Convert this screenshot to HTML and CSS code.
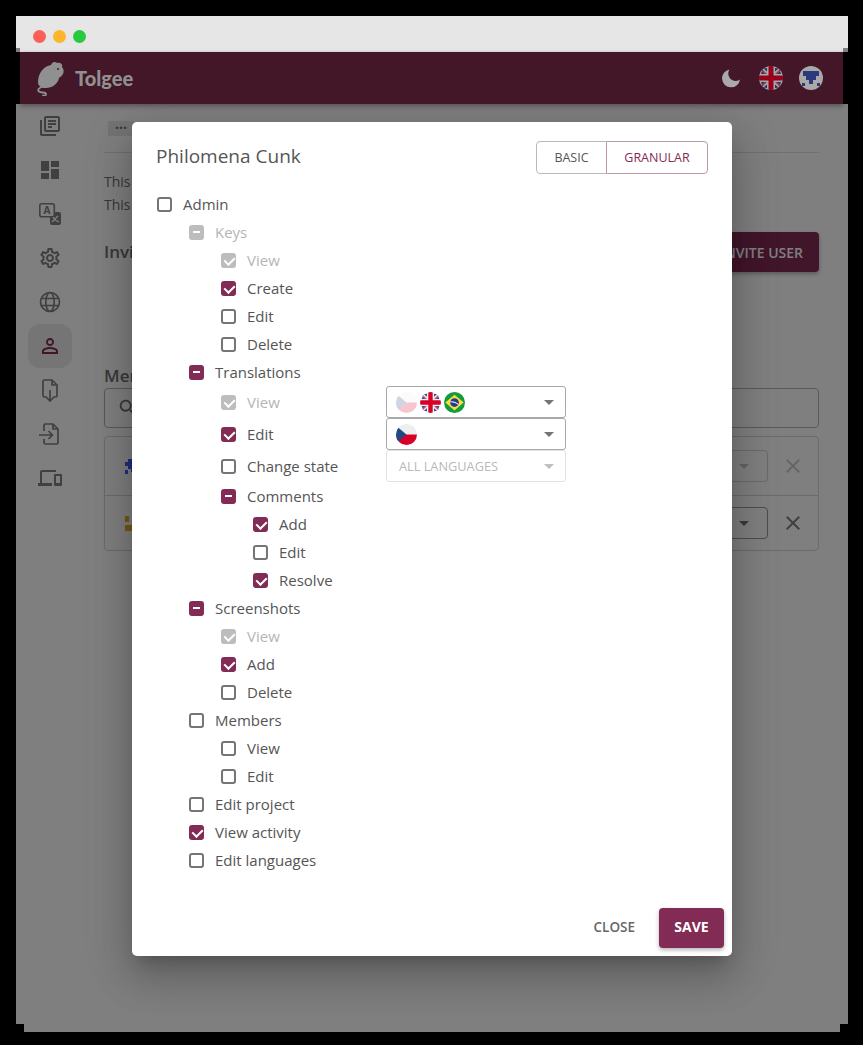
FILE: index.html
```html
<!DOCTYPE html>
<html lang="en">
<head>
    <meta charset="UTF-8">
    <title>Tolgee - Project members</title>
    <link rel="stylesheet" href="styles.css">
</head>
<body>
<svg class="defs" width="0" height="0">
    <defs>
        <clipPath id="round"><circle cx="12" cy="12" r="12"/></clipPath>
        <symbol id="flag-cz" viewBox="0 0 24 24">
            <g clip-path="url(#round)">
                <rect width="24" height="12" fill="#eeeeee"/>
                <rect y="12" width="24" height="12" fill="#d80027"/>
                <path d="M0 2 L12 12 L0 22z" fill="#1f4a85"/>
            </g>
        </symbol>
        <symbol id="flag-gb" viewBox="0 0 24 24">
            <g clip-path="url(#round)">
                <rect width="24" height="24" fill="#f0f0f0"/>
                <path d="M4.500 2.500L8 2v3.500zM19.500 2.500L16 2v3.500zM2 8l1-3 3 3zM22 8l-1-3-3 3zM2 16l1 3 3-3zM22 16l-1 3-3-3zM4.500 21.500L8 22v-3.500zM19.500 21.500L16 22v-3.500z" fill="#2a4a9c"/>
                <path d="M9.500 0h5v9.500H24v5h-9.500V24h-5v-9.500H0v-5h9.500z" fill="#d80027"/>
                <path d="M3 3l5 5h-2L2 4zM21 3l-5 5h2l4-4zM3 21l5-5h-2l-4 4zM21 21l-5-5h2l4 4z" fill="#d80027" opacity="0.7"/>
            </g>
        </symbol>
        <symbol id="flag-br" viewBox="0 0 24 24">
            <g clip-path="url(#round)">
                <rect width="24" height="24" fill="#129c3c"/>
                <path d="M12 3l10.500 9L12 21 1.500 12z" fill="#ffda44"/>
                <circle cx="12" cy="12" r="5" fill="#1f3f8c"/>
                <path d="M7.200 10.600c3.500-.4 7 .8 9.600 3.200l-.5 1c-2.500-2.200-6-3.400-9.400-3.100z" fill="#f0f0f0"/>
            </g>
        </symbol>
        <symbol id="close" viewBox="0 0 24 24">
            <path d="M19 6.410L17.590 5 12 10.590 6.410 5 5 6.410 10.590 12 5 17.590 6.410 19 12 13.410 17.590 19 19 17.590 13.410 12z"/>
        </symbol>
    </defs>
</svg>

<div class="window">
    <div class="titlebar">
        <span class="dot red"></span>
        <span class="dot yellow"></span>
        <span class="dot green"></span>
    </div>
    <div class="titlebar-edge"><div></div></div>

    <div class="header-wrap">
        <header class="header">
            <svg class="logo" viewBox="0 0 28 35" width="28" height="35">
                <path d="M1 21C1 12 7 5 14 4c1-3 4-4 6-2 3-1 6 1 5 4 2 2 2 5 1 7-1 2-3 3-4 4-1 6-7 10-13 10-5 0-8-2-8-6z" fill="#909090"/>
                <path d="M5 26c-3 1-5 3-3 4.500s7 .5 7 2.500-2 1.500-3 1.500" fill="none" stroke="#909090" stroke-width="1.800" stroke-linecap="round"/>
                <circle cx="21" cy="8" r="1" fill="#431628"/>
            </svg>
            <span class="brand">Tolgee</span>
            <svg class="moon" viewBox="0 0 20 20" width="20" height="20">
                <path d="M8.500 1.500a9 9 0 1 0 10.500 10 7 7 0 0 1-4 1.500 7.500 7.500 0 0 1-6.500-11.500z" fill="#aaaaaa"/>
            </svg>
            <svg class="head-flag" width="24" height="24"><use href="#flag-gb"/></svg>
            <svg class="avatar" viewBox="0 0 24 24" width="24" height="24">
                <circle cx="12" cy="12" r="12" fill="#a9a9a9"/>
                <path d="M4 5h16v5h-3v4h-3v4h-4v-4H7v-4H4z" fill="#2b3a7e"/>
                <path d="M3 17h3v3H3zM18 17h3v3h-3z" fill="#2b3a7e"/>
            </svg>
        </header>
    </div>

    <main class="main">
        <nav class="sidebar">
            <a class="nav-item">
                <svg viewBox="0 0 24 24"><path d="M4 6H2v14c0 1.100.9 2 2 2h14v-2H4V6zm16-4H8c-1.100 0-2 .9-2 2v12c0 1.100.9 2 2 2h12c1.100 0 2-.9 2-2V4c0-1.100-.9-2-2-2zm0 14H8V4h12v12zM10 9h8v2h-8zm0 3h4v2h-4zm0-6h8v2h-8z"/></svg>
            </a>
            <a class="nav-item">
                <svg viewBox="0 0 24 24"><path d="M3 13h8V3H3v10zm0 8h8v-6H3v6zm10 0h8V11h-8v10zm0-18v6h8V3h-8z"/></svg>
            </a>
            <a class="nav-item">
                <svg viewBox="0 0 24 24">
                    <rect x="12" y="10" width="11" height="13" rx="2"/>
                    <rect x="1.800" y="1.800" width="14.500" height="13" rx="2" fill="#ffffff" stroke="#808080" stroke-width="1.600"/>
                    <text x="9" y="12" class="nav-letter">A</text>
                    <path d="M14 20l6-6M15 15c1 2 3 4 6 5" fill="none" stroke="#ffffff" stroke-width="1.300"/>
                </svg>
            </a>
            <a class="nav-item">
                <svg viewBox="0 0 24 24"><path d="M19.430 12.980c.04-.32.07-.64.07-.98 0-.34-.03-.66-.07-.98l2.110-1.650c.19-.15.24-.42.12-.64l-2-3.460c-.09-.16-.26-.25-.44-.25-.06 0-.12.01-.17.03l-2.490 1c-.52-.4-1.080-.73-1.690-.98l-.38-2.650C14.460 2.180 14.250 2 14 2h-4c-.25 0-.46.18-.49.42l-.38 2.650c-.61.25-1.170.59-1.690.98l-2.490-1c-.06-.02-.12-.03-.18-.03-.17 0-.34.09-.43.25l-2 3.460c-.13.22-.07.49.12.64l2.110 1.650c-.04.32-.07.65-.07.98 0 .33.03.66.07.98l-2.110 1.650c-.19.15-.24.42-.12.64l2 3.460c.09.16.26.25.44.25.06 0 .12-.01.17-.03l2.490-1c.52.4 1.080.73 1.690.98l.38 2.650c.03.24.24.42.49.42h4c.25 0 .46-.18.49-.42l.38-2.650c.61-.25 1.170-.59 1.690-.98l2.490 1c.06.02.12.03.18.03.17 0 .34-.09.43-.25l2-3.460c.12-.22.07-.49-.12-.64l-2.110-1.650zm-1.980-1.710c.04.31.05.52.05.73 0 .21-.02.43-.05.73l-.14 1.130.89.7 1.080.84-.7 1.210-1.270-.51-1.040-.42-.9.68c-.43.32-.84.56-1.250.73l-1.060.43-.16 1.130-.2 1.350h-1.400l-.19-1.350-.16-1.130-1.060-.43c-.43-.18-.83-.41-1.230-.71l-.91-.7-1.060.43-1.270.51-.7-1.210 1.080-.84.89-.7-.14-1.130c-.03-.31-.05-.54-.05-.74s.02-.43.05-.73l.14-1.130-.89-.7-1.080-.84.7-1.210 1.270.51 1.040.42.9-.68c.43-.32.84-.56 1.250-.73l1.060-.43.16-1.130.2-1.350h1.390l.19 1.350.16 1.130 1.060.43c.43.18.83.41 1.230.71l.91.7 1.060-.43 1.270-.51.7 1.210-1.070.85-.89.7.14 1.130zM12 8c-2.210 0-4 1.790-4 4s1.790 4 4 4 4-1.790 4-4-1.790-4-4-4zm0 6c-1.100 0-2-.9-2-2s.9-2 2-2 2 .9 2 2-.9 2-2 2z"/></svg>
            </a>
            <a class="nav-item">
                <svg viewBox="0 0 24 24" class="stroked">
                    <circle cx="12" cy="12" r="9.500"/>
                    <ellipse cx="12" cy="12" rx="4.200" ry="9.500"/>
                    <path d="M3.200 8.500h17.600M3.200 15.500h17.600"/>
                </svg>
            </a>
            <a class="nav-item active">
                <svg viewBox="0 0 24 24"><path d="M12 5.900c1.160 0 2.100.94 2.100 2.100s-.94 2.100-2.100 2.100S9.900 9.160 9.900 8s.94-2.100 2.100-2.100m0 9c2.970 0 6.100 1.460 6.100 2.100v1.100H5.900V17c0-.64 3.130-2.100 6.100-2.100M12 4C9.790 4 8 5.790 8 8s1.790 4 4 4 4-1.790 4-4-1.790-4-4-4zm0 9c-2.670 0-8 1.340-8 4v3h16v-3c0-2.660-5.330-4-8-4z"/></svg>
            </a>
            <a class="nav-item">
                <svg viewBox="0 0 24 24" class="stroked">
                    <path d="M9 19H6.500A1.500 1.500 0 0 1 5 17.500v-14A1.500 1.500 0 0 1 6.500 2H14l5 5v10.500a1.500 1.500 0 0 1-1.500 1.500H15"/>
                    <path d="M14 2v5h5M12 12v11M8.500 19.500L12 23l3.500-3.500"/>
                </svg>
            </a>
            <a class="nav-item">
                <svg viewBox="0 0 24 24" class="stroked">
                    <path d="M6 9V3.500A1.500 1.500 0 0 1 7.500 2H15l5 5v13.500a1.500 1.500 0 0 1-1.500 1.500h-11A1.500 1.500 0 0 1 6 20.500V17"/>
                    <path d="M15 2v5h5M1 13h13M10.500 9l4 4-4 4"/>
                </svg>
            </a>
            <a class="nav-item">
                <svg viewBox="0 0 24 24"><path d="M4 6h14V4H4c-1.100 0-2 .9-2 2v11H0v3h14v-3H4V6zm19 2h-6c-.55 0-1 .45-1 1v10c0 .55.45 1 1 1h6c.55 0 1-.45 1-1V9c0-.55-.45-1-1-1zm-1 9h-4v-7h4v7z"/></svg>
            </a>
        </nav>

        <section class="content">
            <div class="crumb">&middot;&middot;&middot;</div>
            <div class="divider"></div>
            <p class="line">This</p>
            <p class="line">This</p>
            <div class="invite-row">
                <h2 class="heading">Invitations</h2>
                <span class="invite-btn">INVITE USER</span>
            </div>
            <h2 class="heading members">Members</h2>
            <div class="search">
                <svg viewBox="0 0 24 24" width="22" height="22"><path d="M15.500 14h-.79l-.28-.27C15.410 12.590 16 11.110 16 9.500 16 5.910 13.090 3 9.500 3S3 5.910 3 9.500 5.910 16 9.500 16c1.610 0 3.090-.59 4.230-1.570l.27.28v.79l5 4.990L20.490 19l-4.990-5zm-6 0C7.010 14 5 11.990 5 9.500S7.010 5 9.500 5 14 7.010 14 9.500 11.990 14 9.500 14z"/></svg>
            </div>
            <div class="member-list">
                <div class="member first">
                    <svg class="member-avatar" viewBox="0 0 24 24" width="24" height="24"><path d="M6 5h12v3h3v4h-3v3h-3v3H9v-3H6v-3H3V8h3zM3 16h3v4H3z" fill="#3e5eff"/></svg>
                    <span class="member-select faded"><i class="caret"></i></span>
                    <svg class="remove faded" width="24" height="24"><use href="#close"/></svg>
                </div>
                <div class="member">
                    <svg class="member-avatar" viewBox="0 0 24 24" width="24" height="24"><path d="M3 5h4v6H3zM3 14h18v6H3z" fill="#e8b020"/></svg>
                    <span class="member-select"><i class="caret"></i></span>
                    <svg class="remove" width="24" height="24"><use href="#close"/></svg>
                </div>
            </div>
        </section>

        <div class="overlay">
            <div class="modal">
                <div class="modal-top">
                    <h1 class="modal-title">Philomena Cunk</h1>
                    <div class="toggle">
                        <span class="toggle-btn">Basic</span>
                        <span class="toggle-btn on">Granular</span>
                    </div>
                </div>

                <div class="tree">
                    <div class="row"><i class="box"></i><span>Admin</span></div>
                    <div class="group">
                        <div class="row off"><i class="box mixed"></i><span>Keys</span></div>
                        <div class="group">
                            <div class="row off"><i class="box checked"></i><span>View</span></div>
                            <div class="row"><i class="box checked"></i><span>Create</span></div>
                            <div class="row"><i class="box"></i><span>Edit</span></div>
                            <div class="row"><i class="box"></i><span>Delete</span></div>
                        </div>
                        <div class="row"><i class="box mixed"></i><span>Translations</span></div>
                        <div class="group">
                            <div class="row tall off">
                                <i class="box checked"></i><span class="pick-label">View</span>
                                <div class="lang-select">
                                    <svg class="flag pale" width="21" height="21"><use href="#flag-cz"/></svg>
                                    <svg class="flag" width="21" height="21"><use href="#flag-gb"/></svg>
                                    <svg class="flag" width="21" height="21"><use href="#flag-br"/></svg>
                                    <i class="caret"></i>
                                </div>
                            </div>
                            <div class="row tall">
                                <i class="box checked"></i><span class="pick-label">Edit</span>
                                <div class="lang-select">
                                    <svg class="flag" width="21" height="21"><use href="#flag-cz"/></svg>
                                    <i class="caret"></i>
                                </div>
                            </div>
                            <div class="row tall">
                                <i class="box"></i><span class="pick-label">Change state</span>
                                <div class="lang-select disabled">
                                    <span>All languages</span>
                                    <i class="caret"></i>
                                </div>
                            </div>
                            <div class="row"><i class="box mixed"></i><span>Comments</span></div>
                            <div class="group">
                                <div class="row"><i class="box checked"></i><span>Add</span></div>
                                <div class="row"><i class="box"></i><span>Edit</span></div>
                                <div class="row"><i class="box checked"></i><span>Resolve</span></div>
                            </div>
                        </div>
                        <div class="row"><i class="box mixed"></i><span>Screenshots</span></div>
                        <div class="group">
                            <div class="row off"><i class="box checked"></i><span>View</span></div>
                            <div class="row"><i class="box checked"></i><span>Add</span></div>
                            <div class="row"><i class="box"></i><span>Delete</span></div>
                        </div>
                        <div class="row"><i class="box"></i><span>Members</span></div>
                        <div class="group">
                            <div class="row"><i class="box"></i><span>View</span></div>
                            <div class="row"><i class="box"></i><span>Edit</span></div>
                        </div>
                        <div class="row"><i class="box"></i><span>Edit project</span></div>
                        <div class="row"><i class="box checked"></i><span>View activity</span></div>
                        <div class="row"><i class="box"></i><span>Edit languages</span></div>
                    </div>
                </div>

                <div class="modal-actions">
                    <button class="btn-close">Close</button>
                    <button class="btn-save">Save</button>
                </div>
            </div>
        </div>
    </main>
    <div class="bottom-strip"></div>
</div>
</body>
</html>
```

FILE: styles.css
```css
* {
    box-sizing: border-box;
}
html, body {
    margin: 0;
    background: #000;
}
body {
    font-family: "Open Sans", "Noto Sans", sans-serif;
    color: #555;
    font-size: 15px;
}
.defs {
    position: absolute;
}
.window {
    margin: 16px 15px 0 16px;
    width: 832px;
}

/* browser chrome */
.titlebar {
    height: 32px;
    background: #e6e6e6;
    display: flex;
    gap: 7px;
    padding: 14px 0 0 17px;
}
.titlebar-edge {
    height: 4px;
    background: #7f7f7f;
}
.titlebar-edge div {
    height: 4px;
    margin: 0 5px 0 4px;
    background: #e6e6e6;
}
.dot {
    width: 13px;
    height: 13px;
    border-radius: 50%;
}
.red { background: #fb5f57; }
.yellow { background: #fdb52e; }
.green { background: #27c93f; }

/* header */
.header-wrap {
    position: relative;
    z-index: 2;
    background: #000;
}
.header {
    height: 52px;
    margin: 0 5px 0 4px;
    background: #431628;
    display: flex;
    align-items: center;
    padding: 0 20px 0 17px;
    box-shadow: 0 2px 5px rgba(0, 0, 0, 0.35);
}
.brand {
    font-weight: 900;
    font-size: 20px;
    color: #909090;
    margin-left: 10px;
    font-family: Lato, "Open Sans", sans-serif;
}
.moon {
    margin-left: auto;
}
.head-flag {
    margin-left: 18px;
    filter: brightness(0.7);
}
.avatar {
    margin-left: 16px;
}

/* main area behind the dialog */
.main {
    position: relative;
    display: flex;
    height: 920px;
    background: #fff;
    overflow: hidden;
}
.sidebar {
    width: 88px;
    flex-shrink: 0;
    display: flex;
    flex-direction: column;
    padding-left: 12px;
}
.nav-item {
    width: 44px;
    height: 44px;
    border-radius: 12px;
    display: flex;
    align-items: center;
    justify-content: center;
    fill: #808080;
}
.nav-item svg {
    width: 24px;
    height: 24px;
}
.nav-item .stroked {
    fill: none;
    stroke: #808080;
    stroke-width: 1.7;
}
.nav-item.active {
    background: #ebebeb;
    fill: #822b55;
}
.nav-letter {
    font-size: 10px;
    font-weight: 700;
    text-anchor: middle;
}
.content {
    flex: 1;
    padding: 17px 29px 0 0;
    color: #707070;
}
.crumb {
    width: 26px;
    height: 15px;
    margin-left: 4px;
    background: #e8e8e8;
    font-size: 14px;
    font-weight: 700;
    line-height: 13px;
    text-align: center;
}
.divider {
    height: 1px;
    background: #e0e0e0;
    margin-top: 16px;
}
.line {
    margin: 0;
    line-height: 23px;
    font-size: 14px;
}
.line:first-of-type {
    margin-top: 17px;
}
.invite-row {
    display: flex;
    justify-content: space-between;
    align-items: center;
    margin-top: 16px;
}
.heading {
    margin: 0;
    font-size: 17px;
    line-height: 24px;
    font-weight: 600;
}
.members {
    margin-top: 92px;
}
.invite-btn {
    height: 40px;
    padding: 0 16px;
    display: flex;
    align-items: center;
    background: #822b55;
    color: #fff;
    font-size: 14px;
    font-weight: 600;
    border-radius: 4px;
    box-shadow: 0 2px 4px rgba(0, 0, 0, 0.3);
}
.search {
    height: 40px;
    border: 1px solid #b5b5b5;
    border-radius: 4px;
    display: flex;
    align-items: center;
    padding-left: 12px;
    fill: #707070;
}
.member-list {
    margin-top: 8px;
    border: 1px solid #d6d6d6;
    border-radius: 4px;
}
.member {
    height: 54px;
    display: flex;
    align-items: center;
    padding: 0 13px 0 17px;
}
.member.first {
    height: 59px;
    border-bottom: 1px solid #d6d6d6;
}
.member-select {
    margin-left: auto;
    width: 100px;
    height: 32px;
    border: 1px solid #9a9a9a;
    border-radius: 4px;
    display: flex;
    align-items: center;
    justify-content: flex-end;
    padding-right: 18px;
}
.remove {
    margin-left: 13px;
    fill: #808080;
}
.faded {
    opacity: 0.4;
}

/* dialog */
.overlay {
    position: absolute;
    inset: 0;
    background: rgba(0, 0, 0, 0.5);
}
.modal {
    position: absolute;
    top: 18px;
    left: 116px;
    width: 600px;
    padding: 19px 24px 8px;
    background: #fff;
    border-radius: 5px;
    box-shadow: 0 11px 15px -7px rgba(0, 0, 0, 0.2), 0 24px 38px 3px rgba(0, 0, 0, 0.14), 0 9px 46px 8px rgba(0, 0, 0, 0.12);
}
.modal-top {
    display: flex;
    justify-content: space-between;
    align-items: center;
    height: 33px;
}
.modal-title {
    margin: 0 0 4px;
    font-size: 19px;
    font-weight: 400;
    color: #555;
}
.toggle {
    display: flex;
    height: 33px;
}
.toggle-btn {
    width: 71px;
    display: flex;
    align-items: center;
    justify-content: center;
    border: 1px solid #b9b9b9;
    border-radius: 4px 0 0 4px;
    font-size: 12.5px;
    font-weight: 500;
    text-transform: uppercase;
    color: #555;
}
.toggle-btn.on {
    width: 102px;
    margin-left: -1px;
    border-color: #c095aa;
    border-radius: 0 4px 4px 0;
    color: #822b55;
    font-weight: 400;
}

/* permission tree */
.tree {
    margin-top: 16px;
}
.group {
    margin-left: 32px;
}
.row {
    height: 28px;
    display: flex;
    align-items: center;
    padding-left: 1px;
}
.row.tall {
    height: 32px;
}
.row.off {
    color: #b5b5b5;
}
.box {
    position: relative;
    width: 15px;
    height: 15px;
    margin-right: 11px;
    flex-shrink: 0;
    border: 2px solid #757575;
    border-radius: 3px;
}
.box.checked, .box.mixed {
    background: #822b55;
    border-color: #822b55;
}
.off .box {
    border-color: #bdbdbd;
    background: #bdbdbd;
}
.box.checked::after {
    content: "";
    position: absolute;
    left: 3px;
    top: 0;
    width: 5px;
    height: 8px;
    border: solid #fff;
    border-width: 0 2px 2px 0;
    transform: rotate(45deg);
}
.box.mixed::after {
    content: "";
    position: absolute;
    left: 2px;
    top: 4px;
    width: 7px;
    height: 2px;
    background: #fff;
}
.pick-label {
    width: 139px;
    flex-shrink: 0;
}
.lang-select {
    position: relative;
    width: 180px;
    height: 32px;
    border: 1px solid #a8a8a8;
    border-radius: 3px;
    display: flex;
    align-items: center;
    gap: 3px;
    padding-left: 9px;
}
.lang-select.disabled {
    border-color: #e2e2e2;
    padding-left: 12px;
    color: #b8b8b8;
    font-size: 12.75px;
    text-transform: uppercase;
}
.flag {
    flex-shrink: 0;
}
.flag.pale {
    opacity: 0.22;
}
.caret {
    width: 0;
    height: 0;
    border: 5px solid transparent;
    border-top-color: #757575;
    border-bottom-width: 0;
}
.lang-select .caret {
    position: absolute;
    right: 11px;
    top: 13px;
}
.lang-select.disabled .caret {
    border-top-color: #c0c0c0;
}

/* footer buttons */
.modal-actions {
    display: flex;
    justify-content: flex-end;
    align-items: center;
    gap: 16px;
    margin: 34px -16px 0 0;
}
.btn-close, .btn-save {
    font-family: inherit;
    text-transform: uppercase;
    border: none;
    cursor: pointer;
    padding-bottom: 4px;
}
.btn-close {
    background: none;
    padding-left: 8px;
    padding-right: 8px;
    font-size: 13.5px;
    font-weight: 600;
    color: #666;
}
.btn-save {
    width: 65px;
    height: 40px;
    background: #822b55;
    color: #fff;
    font-size: 14px;
    font-weight: 700;
    border-radius: 4px;
    box-shadow: 0 2px 4px rgba(0, 0, 0, 0.3);
}
.bottom-strip {
    height: 8px;
    margin: 0 8px;
    background: #7f7f7f;
}
```
